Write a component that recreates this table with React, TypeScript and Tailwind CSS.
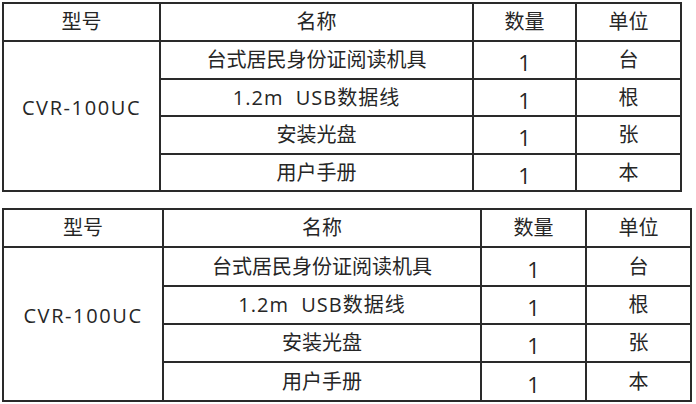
const items = [
  { name: "台式居民身份证阅读机具", qty: "1", unit: "台", wide: false },
  { name: "1.2m  USB数据线", qty: "1", unit: "根", wide: true },
  { name: "安装光盘", qty: "1", unit: "张", wide: false },
  { name: "用户手册", qty: "1", unit: "本", wide: false },
];

type SpecProps = {
  cols: string;
  rows: string;
};

function SpecTable({ cols, rows }: SpecProps) {
  const cell = "bg-white flex items-center justify-center whitespace-pre";
  return (
    <div
      className={`grid gap-[2px] bg-[#2a2a2a] p-[2px] w-fit ${cols} ${rows}`}
    >
      <div className={cell}>型号</div>
      <div className={cell}>名称</div>
      <div className={cell}>数量</div>
      <div className={cell}>单位</div>
      <div className={`${cell} row-span-4 pb-4 tracking-[1.6px]`}>CVR-100UC</div>
      {items.map((it) => (
        <div key={it.name} className="contents">
          <div className={`${cell} ${it.wide ? "tracking-[1px]" : ""}`}>{it.name}</div>
          <div className={`${cell} pt-1 text-[22px]`}>{it.qty}</div>
          <div className={cell}>{it.unit}</div>
        </div>
      ))}
    </div>
  );
}

export default function App() {
  return (
    <div
      className="w-[696px] h-[404px] bg-white pl-[2px] pt-[2px] flex flex-col gap-4 text-[20px] leading-none text-[#262626]"
      style={{ fontFamily: '"Open Sans", "Noto Sans CJK SC", sans-serif' }}
    >
      <SpecTable
        cols="grid-cols-[155px_311px_101px_103px]"
        rows="grid-rows-[36px_36px_35px_36px_35px]"
      />
      <SpecTable
        cols="grid-cols-[158px_316px_103px_103px]"
        rows="grid-rows-[36px_37px_36px_36px_37px]"
      />
    </div>
  );
}
